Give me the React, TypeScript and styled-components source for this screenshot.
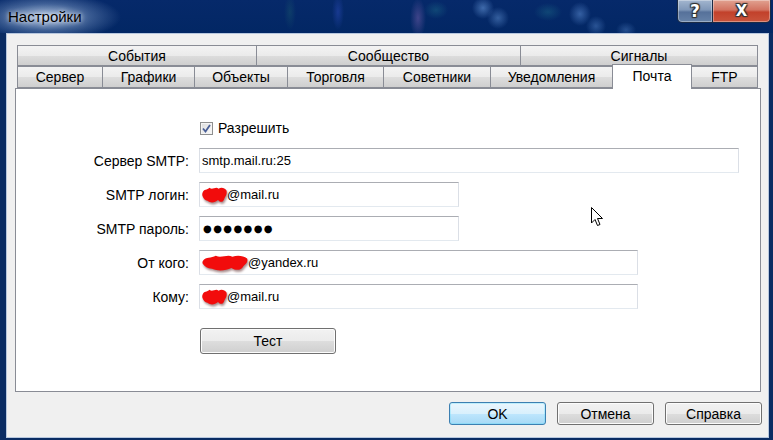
import styled, { createGlobalStyle } from 'styled-components';

const GlobalStyle = createGlobalStyle`
  html, body {
    margin: 0;
    padding: 0;
    background: #032766;
  }
  body {
    font-family: 'Liberation Sans', Arial, sans-serif;
    font-size: 14px;
    color: #000;
  }
  * {
    box-sizing: border-box;
  }
`;

const Window = styled.div`
  width: 773px;
  height: 440px;
  display: flex;
  flex-direction: column;
  background: #0a2c63;
  overflow: hidden;
`;

const TitleBar = styled.div`
  height: 33px;
  flex-shrink: 0;
  display: flex;
  align-items: flex-start;
  background:
    radial-gradient(ellipse 75px 24px at 46px 17px, rgba(190, 210, 236, 0.95), rgba(120, 150, 195, 0.5) 55%, rgba(3, 39, 102, 0) 100%),
    radial-gradient(ellipse 8px 20px at 418px 18px, rgba(150, 110, 190, 0.4), rgba(3, 39, 102, 0)),
    radial-gradient(ellipse 11px 11px at 483px 8px, rgba(110, 160, 225, 0.55), rgba(3, 39, 102, 0)),
    radial-gradient(ellipse 11px 11px at 498px 18px, rgba(110, 160, 225, 0.45), rgba(3, 39, 102, 0)),
    radial-gradient(ellipse 12px 9px at 436px 10px, rgba(40, 140, 150, 0.3), rgba(3, 39, 102, 0)),
    radial-gradient(ellipse 11px 12px at 580px 14px, rgba(100, 150, 220, 0.5), rgba(3, 39, 102, 0)),
    radial-gradient(ellipse 10px 10px at 596px 26px, rgba(100, 150, 220, 0.4), rgba(3, 39, 102, 0)),
    radial-gradient(ellipse 10px 8px at 626px 30px, rgba(100, 150, 220, 0.35), rgba(3, 39, 102, 0)),
    radial-gradient(ellipse 14px 9px at 548px 12px, rgba(40, 140, 150, 0.3), rgba(3, 39, 102, 0)),
    radial-gradient(ellipse 6px 18px at 338px 12px, rgba(60, 90, 220, 0.35), rgba(3, 39, 102, 0)),
    radial-gradient(ellipse 6px 18px at 290px 12px, rgba(40, 120, 110, 0.25), rgba(3, 39, 102, 0)),
    linear-gradient(180deg, #06296a 0%, #022764 100%);
`;

const Title = styled.div`
  margin: 8px 0 0 8px;
  font-size: 15px;
  line-height: 18px;
  color: #000;
  text-shadow: 0 0 4px rgba(255, 255, 255, 0.8), 0 0 10px rgba(255, 255, 255, 0.6);
`;

const CaptionButtons = styled.div`
  margin-left: auto;
  margin-right: 2px;
  display: flex;
`;

const CaptionButton = styled.div<{ $close?: boolean }>`
  width: ${({ $close }) => ($close ? 58 : 36)}px;
  height: 23px;
  display: flex;
  align-items: center;
  justify-content: center;
  border: 1px solid #1b2b45;
  border-top: none;
  border-left: ${({ $close }) => ($close ? 'none' : '1px solid #1b2b45')};
  border-radius: ${({ $close }) => ($close ? '0 0 5px 0' : '0 0 0 5px')};
  box-shadow: inset 0 0 0 1px rgba(255, 255, 255, 0.35);
  background: ${({ $close }) =>
    $close
      ? 'linear-gradient(180deg, #e1a291 0%, #d27361 45%, #c2412b 55%, #c9543c 100%)'
      : 'linear-gradient(180deg, #a3b6cf 0%, #7f97b8 45%, #56719a 55%, #6682a8 100%)'};
  color: #fff;
  font-family: 'DejaVu Sans', sans-serif;
  font-weight: bold;
  font-size: ${({ $close }) => ($close ? 15 : 17)}px;
  text-shadow: 0 0 1px #222, 1px 1px 1px #333, -1px -1px 1px #333, 1px -1px 1px #333, -1px 1px 1px #333;
`;

const Client = styled.div`
  flex: 1;
  margin: 0 4px 2px 6px;
  border: 1px solid #b7c7de;
  background: #f0f0f0;
  padding: 11px 6px 0 8px;
  display: flex;
  flex-direction: column;
`;

const TabControl = styled.div`
  width: 746px;
  height: 347px;
  display: flex;
  flex-direction: column;
`;

const TabRow = styled.div<{ $h: number }>`
  height: ${({ $h }) => $h}px;
  display: flex;
  align-items: flex-end;
  padding: 0 2px;
`;

const Tab = styled.div<{ $w: number; $active?: boolean }>`
  width: ${({ $w }) => $w}px;
  height: ${({ $active }) => ($active ? '25px' : '100%')};
  margin-right: -1px;
  margin-bottom: ${({ $active }) => ($active ? '-1px' : '0')};
  position: ${({ $active }) => ($active ? 'relative' : 'static')};
  z-index: ${({ $active }) => ($active ? 2 : 'auto')};
  border: 1px solid #898c95;
  border-bottom: ${({ $active }) => ($active ? 'none' : '1px solid #898c95')};
  background: ${({ $active }) =>
    $active ? '#fff' : 'linear-gradient(180deg, #f3f3f3 0%, #ebebeb 50%, #dddddd 51%, #cfcfcf 100%)'};
  display: flex;
  align-items: ${({ $active }) => ($active ? 'flex-start' : 'center')};
  padding-top: ${({ $active }) => ($active ? '3px' : '0')};
  justify-content: center;
  line-height: 16px;
  white-space: nowrap;
`;

const Panel = styled.div`
  flex: 1;
  position: relative;
  background: #fff;
  border: 1px solid #898c95;
  padding-top: 32px;
`;

const Form = styled.div`
  display: grid;
  grid-template-columns: 173px auto;
  column-gap: 10px;
  row-gap: 9px;
  align-items: center;
`;

const CheckRow = styled.label`
  grid-column: 2;
  display: flex;
  align-items: center;
  gap: 5px;
  height: 14px;
  margin-bottom: 4px;
  margin-left: 1px;
`;

const CheckBox = styled.span`
  width: 13px;
  height: 13px;
  border: 1px solid #8e8f8f;
  background: linear-gradient(135deg, #dcdcdc 0%, #fbfbfb 100%);
  box-shadow: inset 0 0 0 1px #f4f4f4;
  display: flex;
  align-items: center;
  justify-content: center;
`;

const Label = styled.div`
  justify-self: end;
  white-space: nowrap;
`;

const Field = styled.div<{ $w: number }>`
  width: ${({ $w }) => $w}px;
  height: 25px;
  border: 1px solid #e3e9ef;
  border-top-color: #abadb3;
  border-left-color: #dbdfe6;
  border-right-color: #dbdfe6;
  background: #fff;
  display: flex;
  align-items: center;
  padding-left: 2px;
  font-size: 13px;
  white-space: nowrap;
`;

const Dots = styled.span`
  font-family: 'DejaVu Sans', sans-serif;
  font-size: 10px;
  letter-spacing: 1.4px;
  padding-left: 1px;
`;

const Button = styled.div<{ $w: number; $h: number; $default?: boolean }>`
  width: ${({ $w }) => $w}px;
  height: ${({ $h }) => $h}px;
  border: 1px solid ${({ $default }) => ($default ? '#3c7fb1' : '#707070')};
  border-radius: 3px;
  box-shadow: inset 0 0 0 1px ${({ $default }) => ($default ? '#48d8fb44' : '#fcfcfc')};
  background: ${({ $default }) =>
    $default
      ? 'linear-gradient(180deg, #eaf6fd 0%, #d9f0fc 50%, #bee6fd 51%, #a7d9f5 100%)'
      : 'linear-gradient(180deg, #f2f2f2 0%, #ebebeb 50%, #dddddd 51%, #cfcfcf 100%)'};
  display: flex;
  align-items: center;
  justify-content: center;
`;

const TestButton = styled(Button)`
  grid-column: 2;
  margin-top: 10px;
  margin-left: 1px;
`;

const ButtonRow = styled.div`
  margin-top: 10px;
  display: flex;
  justify-content: flex-end;
  gap: 11px;
`;

const Cursor = styled.svg`
  position: absolute;
  left: 575px;
  top: 118px;
`;

const ScribbleSvg = styled.svg`
  flex-shrink: 0;
  overflow: visible;
  filter: drop-shadow(1px 2px 1px rgba(60, 0, 0, 0.45));
`;

const topTabs = [
  { label: 'События', w: 240 },
  { label: 'Сообщество', w: 265 },
  { label: 'Сигналы', w: 238 },
];

const bottomTabs = [
  { label: 'Сервер', w: 86 },
  { label: 'Графики', w: 93 },
  { label: 'Объекты', w: 94 },
  { label: 'Торговля', w: 97 },
  { label: 'Советники', w: 108 },
  { label: 'Уведомления', w: 123 },
  { label: 'Почта', w: 80, active: true },
  { label: 'FTP', w: 67 },
];

function Scribble({ w }: { w: number }) {
  return (
    <ScribbleSvg width={w} height={18} viewBox="0 0 100 40" preserveAspectRatio="none">
      <path
        d="M3 14 C 8 6, 20 10, 30 4 C 42 10, 55 0, 66 6 C 78 2, 90 4, 98 10 C 101 17, 95 22, 90 27 C 86 36, 74 38, 64 31 C 52 37, 36 39, 22 33 C 12 31, 6 28, 2 22 C 0 19, 1 16, 3 14 Z"
        fill="#f20c0c"
      />
    </ScribbleSvg>
  );
}

export default function App() {
  return (
    <>
      <GlobalStyle />
      <Window>
        <TitleBar>
          <Title>Настройки</Title>
          <CaptionButtons>
            <CaptionButton>?</CaptionButton>
            <CaptionButton $close>X</CaptionButton>
          </CaptionButtons>
        </TitleBar>
        <Client>
          <TabControl>
            <TabRow $h={21}>
              {topTabs.map((t) => (
                <Tab key={t.label} $w={t.w}>
                  {t.label}
                </Tab>
              ))}
            </TabRow>
            <TabRow $h={22}>
              {bottomTabs.map((t) => (
                <Tab key={t.label} $w={t.w} $active={t.active}>
                  {t.label}
                </Tab>
              ))}
            </TabRow>
            <Panel>
              <Form>
                <CheckRow>
                  <CheckBox>
                    <svg width="9" height="9" viewBox="0 0 9 9">
                      <path d="M1 4.5 L3.5 7.5 L8 1" fill="none" stroke="#4a5f97" strokeWidth="1.8" />
                    </svg>
                  </CheckBox>
                  Разрешить
                </CheckRow>
                <Label>Сервер SMTP:</Label>
                <Field $w={540}>smtp.mail.ru:25</Field>
                <Label>SMTP логин:</Label>
                <Field $w={260}>
                  <Scribble w={25} />
                  @mail.ru
                </Field>
                <Label>SMTP пароль:</Label>
                <Field $w={260}>
                  <Dots>●●●●●●●</Dots>
                </Field>
                <Label>От кого:</Label>
                <Field $w={439}>
                  <Scribble w={46} />
                  @yandex.ru
                </Field>
                <Label>Кому:</Label>
                <Field $w={439}>
                  <Scribble w={25} />
                  @mail.ru
                </Field>
                <TestButton $w={136} $h={26}>
                  Тест
                </TestButton>
              </Form>
              <Cursor width="13" height="20" viewBox="0 0 13 20">
                <path
                  d="M0.5 0.5 L0.5 16 L4 12.5 L6.5 18.5 L9 17.5 L6.5 11.5 L11.5 11.5 Z"
                  fill="#fff"
                  stroke="#000"
                  strokeWidth="1"
                  strokeLinejoin="round"
                />
              </Cursor>
            </Panel>
          </TabControl>
          <ButtonRow>
            <Button $w={97} $h={23} $default>
              OK
            </Button>
            <Button $w={97} $h={23}>
              Отмена
            </Button>
            <Button $w={97} $h={23}>
              Справка
            </Button>
          </ButtonRow>
        </Client>
      </Window>
    </>
  );
}
